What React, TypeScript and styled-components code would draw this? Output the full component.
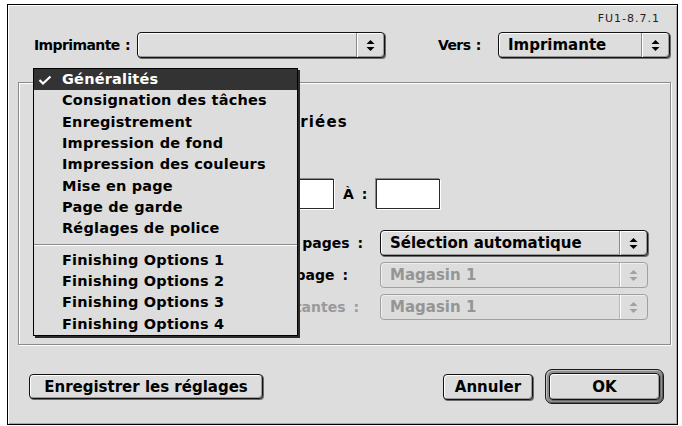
import React from 'react';
import styled, { createGlobalStyle } from 'styled-components';

const GlobalStyle = createGlobalStyle`
  html, body {
    margin: 0;
    padding: 0;
    background: #ffffff;
  }
  body {
    font-family: "DejaVu Sans", "Liberation Sans", sans-serif;
    color: #000;
  }
`;

const Page = styled.div`
  width: 682px;
  height: 426px;
  padding: 4px 0 0 7px;
  box-sizing: border-box;
`;

const Window = styled.div`
  position: relative;
  width: 671px;
  height: 421px;
  box-sizing: border-box;
  border: 1px solid #000;
  background: #dddddd;
  box-shadow: inset 1px 1px 0 #fff, inset -1px -1px 0 #a8a8a8;
  display: flex;
  flex-direction: column;
`;

const Version = styled.div`
  margin-top: 8px;
  height: 12px;
  line-height: 12px;
  padding-right: 17px;
  text-align: right;
  font-size: 11px;
  letter-spacing: 1px;
  color: #222;
`;

const TopRow = styled.div`
  display: flex;
  align-items: center;
  margin-top: 7px;
  height: 26px;
  padding-left: 26px;
`;

const Label = styled.span<{ $w?: number; $gap?: number; $dim?: boolean; $tight?: boolean }>`
  flex: none;
  width: ${p => (p.$w ? `${p.$w}px` : 'auto')};
  margin-left: ${p => p.$gap ?? 0}px;
  font-size: 14px;
  font-weight: bold;
  letter-spacing: ${p => (p.$tight ? '-0.6px' : '0')};
  word-spacing: ${p => (p.$tight ? '1px' : '3px')};
  text-align: ${p => (p.$tight ? 'left' : 'right')};
  white-space: nowrap;
  color: ${p => (p.$dim ? '#9a9a9a' : '#000')};
`;

const PopupBox = styled.div<{ $w: number; $gap?: number; $off?: boolean }>`
  flex: none;
  width: ${p => p.$w}px;
  margin-left: ${p => p.$gap ?? 0}px;
  height: 26px;
  box-sizing: border-box;
  display: flex;
  border: 1px solid ${p => (p.$off ? '#a0a0a0' : '#111')};
  border-radius: 4px;
  background: #dddddd;
  box-shadow: ${p =>
    p.$off
      ? 'inset 1px 1px 0 #eee'
      : '1px 1px 0 #6a6a6a, inset 1px 1px 0 #fff, inset -1px -1px 0 #999'};
`;

const PopupText = styled.span<{ $off?: boolean }>`
  flex: 1;
  padding-left: 9px;
  font-size: 15px;
  font-weight: bold;
  line-height: 24px;
  white-space: nowrap;
  overflow: hidden;
  color: ${p => (p.$off ? '#959595' : '#000')};
`;

const ArrowCell = styled.span<{ $off?: boolean }>`
  flex: none;
  width: 27px;
  display: flex;
  align-items: center;
  justify-content: center;
  border-left: 1px solid ${p => (p.$off ? '#b8b8b8' : '#8a8a8a')};
  box-shadow: inset 1px 0 0 #fff;
  color: ${p => (p.$off ? '#a0a0a0' : '#000')};
`;

const Arrows = () => (
  <svg width="9" height="13" viewBox="0 0 9 13">
    <polygon points="0.5,5 4.5,1 8.5,5" fill="currentColor" />
    <polygon points="0.5,8 4.5,12 8.5,8" fill="currentColor" />
  </svg>
);

const Popup: React.FC<{ w: number; gap?: number; text?: string; off?: boolean }> = ({
  w,
  gap,
  text,
  off,
}) => (
  <PopupBox $w={w} $gap={gap} $off={off}>
    <PopupText $off={off}>{text}</PopupText>
    <ArrowCell $off={off}>
      <Arrows />
    </ArrowCell>
  </PopupBox>
);

const GroupBox = styled.div`
  margin: 24px 0 0 10px;
  width: 653px;
  height: 263px;
  box-sizing: border-box;
  border: 1px solid #8a8a8a;
  box-shadow: 1px 1px 0 #fff, inset 1px 1px 0 #fff;
  display: flex;
  flex-direction: column;
`;

const Row = styled.div<{ $top: number; $h: number }>`
  display: flex;
  align-items: center;
  margin-top: ${p => p.$top}px;
  height: ${p => p.$h}px;
  flex: none;
`;

const EndCell = styled.div<{ $w: number }>`
  flex: none;
  width: ${p => p.$w}px;
  display: flex;
  align-items: center;
  justify-content: flex-end;
  gap: 6px;
`;

const CheckBox = styled.span`
  width: 12px;
  height: 12px;
  border: 1px solid #111;
  background: #eee;
  box-shadow: inset 1px 1px 0 #fff, inset -1px -1px 0 #aaa;
`;

const CheckLabel = styled.span`
  font-size: 15px;
  font-weight: bold;
  letter-spacing: 1.2px;
  white-space: nowrap;
`;

const Field = styled.div<{ $w: number; $gap?: number }>`
  flex: none;
  width: ${p => p.$w}px;
  height: 30px;
  margin-left: ${p => p.$gap ?? 0}px;
  box-sizing: border-box;
  background: #fff;
  border: 1px solid #2a2a2a;
  box-shadow: -1px -1px 0 #8a8a8a, 1px 1px 0 #fff;
`;

const BottomRow = styled.div`
  display: flex;
  align-items: center;
  margin-top: 24px;
  height: 35px;
  padding: 0 13px 0 21px;
`;

const PushButton = styled.button<{ $w: number; $h?: number }>`
  flex: none;
  width: ${p => p.$w}px;
  height: ${p => p.$h ?? 25}px;
  box-sizing: border-box;
  padding: 0;
  border: 1px solid #111;
  border-radius: 4px;
  background: #dddddd;
  box-shadow: inset 1px 1px 0 #fff, inset -1px -1px 0 #9a9a9a, 1px 1px 0 #6a6a6a;
  font-family: "DejaVu Sans", "Liberation Sans", sans-serif;
  font-size: 15px;
  font-weight: bold;
  color: #000;
`;

const Spacer = styled.div`
  flex: 1;
`;

const DefaultRing = styled.div`
  flex: none;
  margin-left: 12px;
  width: 119px;
  height: 35px;
  box-sizing: border-box;
  padding: 3px;
  border: 1px solid #1a1a1a;
  border-radius: 7px;
  background: #8e8e8e;
  box-shadow: inset 1px 1px 0 #c0c0c0, inset -1px -1px 0 #5a5a5a;
  display: flex;
`;

const Menu = styled.div`
  position: absolute;
  left: 25px;
  top: 63px;
  width: 265px;
  box-sizing: border-box;
  border: 1px solid #000;
  background: #dddddd;
  box-shadow: 2px 2px 0 #2a2a2a;
  z-index: 10;
`;

const MenuItem = styled.div<{ $sel?: boolean }>`
  position: relative;
  height: 21.33px;
  line-height: 21.33px;
  padding-left: 28px;
  font-size: 14.5px;
  font-weight: bold;
  letter-spacing: 0.2px;
  white-space: nowrap;
  background: ${p => (p.$sel ? '#333333' : 'transparent')};
  color: ${p => (p.$sel ? '#fff' : '#000')};
`;

const Check = styled.svg`
  position: absolute;
  left: 4px;
  top: 6px;
`;

const Separator = styled.div`
  height: 10px;
  display: flex;
  align-items: center;
  &::after {
    content: '';
    flex: 1;
    height: 1px;
    background: #8a8a8a;
    box-shadow: 0 1px 0 #fff;
  }
`;

const panels = [
  'Généralités',
  'Consignation des tâches',
  'Enregistrement',
  'Impression de fond',
  'Impression des couleurs',
  'Mise en page',
  'Page de garde',
  'Réglages de police',
];

const finishing = [
  'Finishing Options 1',
  'Finishing Options 2',
  'Finishing Options 3',
  'Finishing Options 4',
];

export default function App() {
  return (
    <Page>
      <GlobalStyle />
      <Window>
        <Version>FU1-8.7.1</Version>
        <TopRow>
          <Label $w={103} $tight>Imprimante :</Label>
          <Popup w={248} />
          <Label $w={60} $gap={53} $tight>Vers :</Label>
          <Popup w={172} text="Imprimante" />
        </TopRow>

        <GroupBox>
          <Row $top={29} $h={20}>
            <EndCell $w={329}>
              <CheckBox />
              <CheckLabel>Copies triées</CheckLabel>
            </EndCell>
          </Row>
          <Row $top={47} $h={30}>
            <EndCell $w={315}>
              <Label>De :</Label>
              <Field $w={60} />
            </EndCell>
            <Label $w={22} $gap={9}>À :</Label>
            <Field $w={64} $gap={11} />
          </Row>
          <Row $top={21} $h={26}>
            <Label $w={344}>Toutes les pages :</Label>
            <Popup w={268} gap={17} text="Sélection automatique" />
          </Row>
          <Row $top={6} $h={26}>
            <Label $w={329}>Première page :</Label>
            <Popup w={268} gap={32} text="Magasin 1" off />
          </Row>
          <Row $top={6} $h={26}>
            <Label $w={340} $dim>Pages restantes :</Label>
            <Popup w={268} gap={21} text="Magasin 1" off />
          </Row>
        </GroupBox>

        <BottomRow>
          <PushButton $w={234}>Enregistrer les réglages</PushButton>
          <Spacer />
          <PushButton $w={90} $h={26}>Annuler</PushButton>
          <DefaultRing>
            <PushButton $w={111} $h={27}>OK</PushButton>
          </DefaultRing>
        </BottomRow>

        <Menu>
          {panels.map((name, i) => (
            <MenuItem key={name} $sel={i === 0}>
              {i === 0 && (
                <Check width="14" height="10" viewBox="0 0 14 10">
                  <polyline
                    points="1.5,5 5,8.5 12.5,1.5"
                    fill="none"
                    stroke="#fff"
                    strokeWidth="2.2"
                  />
                </Check>
              )}
              {name}
            </MenuItem>
          ))}
          <Separator />
          {finishing.map(name => (
            <MenuItem key={name}>{name}</MenuItem>
          ))}
        </Menu>
      </Window>
    </Page>
  );
}
